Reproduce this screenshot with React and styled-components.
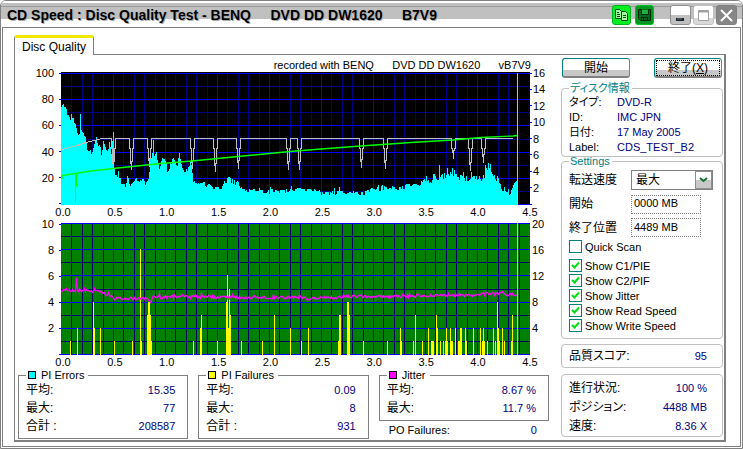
import React from "react";
import styled, { createGlobalStyle, css } from "styled-components";

const GlobalStyle = createGlobalStyle`
  *, *::before, *::after { box-sizing: border-box; }
  body {
    margin: 0;
    background: #fff;
    color: #000;
    font: 12px/14px "Liberation Sans", "Noto Sans CJK JP", sans-serif;
    font-feature-settings: "palt";
  }
  button, input, select { font: inherit; color: inherit; margin: 0; }
`;

/* ---------- window frame ---------- */

const Window = styled.div`
  display: flex;
  flex-direction: column;
  min-height: 100vh;
  border: 1px solid #808080;
  border-radius: 6px 6px 0 0;
  background: #fff;
`;

const TitleBar = styled.header`
  display: flex;
  align-items: center;
  gap: 3px;
  height: 26px;
  padding: 2px 5px 0 6px;
  border-radius: 5px 5px 0 0;
  background: linear-gradient(#fff 2px, #c0c0c0 2px 5px, #999 5px 6px, #c0c0c0 6px 18px, #fff 18px);
`;

const Title = styled.h1`
  flex: 1;
  margin: 0;
  font: bold 14px/16px "Liberation Sans", sans-serif;
  white-space: pre;
  text-shadow: 1px 1px 0 #aaa;
`;

const captionTones = {
  green: css`background: #00f020; border-color: #00b020;`,
  dark: css`background: #009820; border-color: #00c020;`,
  light: css`background: linear-gradient(#fff 9px, #c0c0c0 9px); border-color: #909090;`,
  pale: css`background: linear-gradient(#fff 12px, #d8d8d8 12px); border-color: #c0c0c0;`,
  gray: css`background: #868686; border-color: #808080;`,
};

const CaptionButton = styled.button`
  display: grid;
  place-items: center;
  width: ${(p) => (p.$small ? 19 : 21)}px;
  height: 20px;
  padding: 0;
  border: 1px solid;
  border-radius: 3px;
  ${(p) => captionTones[p.$tone]}
`;

const CaptionGroup = styled.div`
  display: flex;
  gap: ${(p) => p.$gap}px;
  margin-right: ${(p) => p.$end || 0}px;
`;

const Client = styled.main`
  flex: 1;
  display: flex;
  flex-direction: column;
  margin: 0 1px 1px;
  padding: 7px 14px 4px 11px;
  border: 1px solid #808080;
`;

const TabList = styled.div`
  display: flex;
`;

const Tab = styled.button`
  position: relative;
  z-index: 1;
  height: 20px;
  margin-bottom: -1px;
  padding: 0 7px;
  border: 1px solid #808080;
  border-top: 3px solid #f0e800;
  border-bottom: 0;
  border-radius: 3px 3px 0 0;
  background: #fff;
`;

const Panel = styled.section`
  flex: 1;
  display: flex;
  gap: 12px;
  padding: 3px 1px 0 3px;
  border: 1px solid #808080;
  border-right-width: 2px;
  border-bottom-width: 2px;
`;

const MainColumn = styled.div`
  flex: 1;
  min-width: 0;
`;

const SideColumn = styled.aside`
  flex: none;
  width: 162px;
`;

/* ---------- charts ---------- */

const Recorded = styled.p`
  margin: 0;
  padding-right: 18px;
  font-size: 11px;
  text-align: right;
  white-space: pre;
`;

const ChartGrid = styled.div`
  display: grid;
  grid-template-columns: 43px minmax(0, 1fr) 19px;
  margin-bottom: ${(p) => (p.$last ? 1 : 5)}px;
`;

const Plot = styled.svg`
  display: block;
  width: 100%;
  height: ${(p) => (p.$cap ? 133 : 132)}px;
  border-top: ${(p) => (p.$cap ? "1px solid #000" : "0")};
  background: ${(p) => p.$back};
`;

const Axis = styled.div`
  display: flex;
  flex-direction: column;
  justify-content: space-between;
  padding: 1px 0;
  font-size: 11px;
`;

const AxisTick = styled.span`
  display: flex;
  align-items: center;
  justify-content: flex-end;
  flex-direction: ${(p) => (p.$right ? "row-reverse" : "row")};
  gap: ${(p) => (p.$right ? 1 : 5)}px;
  height: 0;
  &::after {
    content: "";
    width: ${(p) => (p.$right && !p.$mark ? 1 : 2)}px;
    height: 1px;
    background: ${(p) => (p.$right && !p.$mark ? "transparent" : "#0000ff")};
  }
`;

const BottomAxis = styled.div`
  grid-column: 2;
  display: flex;
  justify-content: space-between;
  padding: 1px 0 0 2px;
  font-size: 11px;
  line-height: 12px;
`;

const BottomTick = styled.span`
  display: flex;
  justify-content: center;
  width: 0;
`;

const W = 469;
const H = 132;
const seeded = (n) => {
  const v = Math.sin(n * 127.1 + 11.7) * 43758.5453;
  return v - Math.floor(v);
};
const interpolate = (points, x) => {
  const i = points.findIndex((p) => p[0] >= x);
  if (i <= 0) return points[i === 0 ? 0 : points.length - 1][1];
  const [x0, y0] = points[i - 1];
  const [x1, y1] = points[i];
  return y0 + ((y1 - y0) * (x - x0)) / (x1 - x0);
};

const errorProfile = [
  [0, 97], [2, 101], [4, 95], [6, 90], [9, 82], [10, 88], [13, 80], [16, 73], [18, 70], [19, 90], [20, 75],
  [24, 65], [26, 53], [29, 52], [32, 57], [35, 66], [38, 57], [40, 52], [42, 61], [45, 53], [48, 60], [50, 50],
  [52, 73], [53, 35], [55, 30], [57, 31], [60, 22], [64, 20], [66, 27], [69, 21], [75, 26], [78, 21], [81, 26],
  [84, 20], [88, 28], [89, 42], [91, 50], [92, 63], [93, 48], [95, 50], [98, 38], [101, 47], [104, 41], [107, 34],
  [111, 46], [115, 37], [118, 48], [121, 36], [124, 30], [127, 40], [130, 40], [132, 24], [134, 20], [140, 24],
  [145, 20], [150, 18], [160, 16], [163, 25], [165, 21], [168, 27], [172, 23], [177, 21], [180, 16], [186, 14],
  [196, 13], [229, 14], [239, 15], [249, 15], [259, 12], [279, 13], [299, 11], [309, 14], [319, 15], [334, 17],
  [349, 19], [364, 22], [375, 25], [386, 30], [398, 28], [409, 26], [422, 26], [423, 26], [424, 43], [426, 36],
  [429, 38], [433, 30], [437, 22], [441, 16], [446, 12], [450, 13], [453, 20], [455, 23],
];
const errorSpikes = { 52: 73, 365: 29, 378: 40, 386: 37, 391: 37, 402: 33, 410: 33, 422: 30 };
const errorPath =
  `M0 ${H}` +
  Array.from({ length: 456 }, (_, x) => {
    const sample = x - (x % 2 && seeded(x) < 0.5 ? 1 : 0);
    const base = interpolate(errorProfile, x);
    const noise = (seeded(sample) - 0.5) * (base > 24 ? 7 : 5) + (seeded(sample + 900) > 0.88 ? 3 : 0);
    const h = Math.round(errorSpikes[x] || base + noise);
    return `V${H - h}H${x + 1}`;
  }).join("") +
  `V${H}Z`;

const dips = [
  [52, 97], [70, 97], [88, 94], [131, 96], [154, 99], [177, 96], [227, 97], [238, 97], [300, 95], [324, 96],
  [392, 86], [409, 98], [422, 90],
];
const speedLimit =
  "M1 76.5L8 74.5L16 72.5L25 69.5L33 67.5L41 65.5" +
  dips
    .map(([x, y]) => `H${x - 1.5}V75H${x - 0.5}V${y - 7}H${x + 0.5}V${y}V${y - 9}H${x + 1.5}V75H${x + 2.5}V65.5`)
    .join("") +
  "H452";

const readSpeed =
  "M1 106V102.5L30 98L52 95.5L100 90.5L131 88L177 83.5L229 78.5L260 76L300 73L350 69.5L392 67L420 64.5L452 63L456 62.5";

const failures = [
  [9, 1], [16, 2], [32, 4], [33, 2], [39, 2], [53, 1], [71, 1], [79, 8], [80, 1], [86, 3], [87, 4], [88, 4],
  [89, 3], [90, 1], [132, 1], [139, 2], [140, 3], [156, 1], [165, 4], [166, 6], [167, 2], [168, 5], [169, 3],
  [180, 1], [201, 1], [213, 3], [229, 2], [240, 1], [247, 2], [277, 1], [278, 3], [279, 3], [286, 4], [287, 4],
  [288, 3], [302, 1], [326, 1], [339, 2], [340, 1], [352, 1], [354, 3], [361, 1], [367, 2], [370, 1], [371, 1],
  [372, 1], [375, 3], [376, 2], [379, 1], [382, 1], [384, 1], [385, 2], [386, 1], [389, 2], [390, 1], [391, 1],
  [394, 2], [397, 1], [398, 1], [399, 2], [400, 2], [404, 2], [405, 1], [412, 2], [419, 2], [421, 1], [422, 2],
  [423, 1], [426, 1], [432, 2], [434, 1], [436, 4], [437, 2], [438, 1], [441, 2], [443, 1], [450, 1], [451, 3],
];
const failurePath = failures
  .map(([x, v]) => `M${x} ${H}V${Math.round(H - 1 - v * 13.1)}H${x + 1}V${H}Z`)
  .join("");

const jitterProfile = [
  [0, 68], [4, 66], [10, 67], [14, 67], [15, 55], [16, 67], [37, 68], [45, 71], [53, 75], [85, 75], [89, 78],
  [92, 72], [100, 74], [120, 73], [160, 74], [200, 74], [229, 74], [250, 75], [270, 74], [300, 73], [340, 73],
  [380, 72], [410, 72], [425, 70], [456, 71],
];
const jitterPath = Array.from({ length: 456 }, (_, x) => {
  const wave = (seeded(x + 300) - 0.5) * 3 + (seeded(x + 700) > 0.92 ? -2 : 0);
  return `${x ? "L" : "M"}${x + 0.5} ${Math.round(interpolate(jitterProfile, x) + wave) + 0.5}`;
}).join("");

function GridLines({ minor }) {
  const columns = Array.from({ length: 44 }, (_, i) => i + 1);
  const rows = Array.from({ length: 11 }, (_, i) => i);
  const x = (i) => Math.round(i * 10.4) + 0.5;
  const y = (i) => Math.round(i * 13.1) + 0.5;
  return (
    <g fill="none" shapeRendering="crispEdges">
      <path
        stroke={minor}
        d={
          columns.filter((i) => i % 5).map((i) => `M${x(i)} 0V${H}`).join("") +
          rows.filter((i) => i % 2).map((i) => `M0 ${y(i)}H${W}`).join("")
        }
      />
      <path
        stroke="#0000ff"
        d={
          columns.filter((i) => i % 5 === 0).map((i) => `M${x(i)} 0V${H}`).join("") +
          rows.filter((i) => i % 2 === 0).map((i) => `M0 ${y(i)}H${W}`).join("")
        }
      />
    </g>
  );
}

const positions = ["0.0", "0.5", "1.0", "1.5", "2.0", "2.5", "3.0", "3.5", "4.0", "4.5"];

function Chart({ label, left, right, marks, cap, back, minor, last, children }) {
  return (
    <ChartGrid $last={last}>
      <Axis>
        {left.map((t, i) => <AxisTick key={i}>{t}</AxisTick>)}
      </Axis>
      <Plot $cap={cap} $back={back} viewBox={`0 0 ${W} ${H}`} preserveAspectRatio="none" role="img" aria-label={label}>
        <GridLines minor={minor} />
        {children}
        <path d={`M456.5 0V${H}`} stroke="#c0c0c0" shapeRendering="crispEdges" />
      </Plot>
      <Axis>
        {right.map((t, i) => <AxisTick key={i} $right $mark={marks}>{t}</AxisTick>)}
      </Axis>
      <BottomAxis>
        {positions.map((t) => <BottomTick key={t}>{t}</BottomTick>)}
      </BottomAxis>
    </ChartGrid>
  );
}

/* ---------- statistics ---------- */

const StatsRow = styled.div`
  display: grid;
  grid-template-columns: repeat(3, minmax(0, 1fr));
  gap: 10px;
`;

const StatBox = styled.fieldset`
  min-width: 0;
  margin: 0;
  padding: 0 12px ${(p) => (p.$tight ? 3 : 2)}px 7px;
  border: 1px solid #808080;
`;

const StatLegend = styled.legend`
  display: flex;
  align-items: center;
  gap: 5px;
  height: 12px;
  padding: 0 4px 0 2px;
  font-size: 11px;
  line-height: 12px;
`;

const Swatch = styled.i`
  width: 8px;
  height: 8px;
  border: 1px solid #000;
  background: ${(p) => p.$color};
`;

const DataRow = styled.div`
  display: flex;
  align-items: center;
  justify-content: space-between;
  height: ${(p) => p.$height || 18}px;
  padding: ${(p) => (p.$loose ? "0 12px 0 10px" : "0")};
  font-size: ${(p) => (p.$loose ? 11 : 12)}px;
  white-space: nowrap;
`;

const Value = styled.output`
  color: #000080;
  font-size: 11px;
`;

function Stat({ title, color, rows, tight }) {
  return (
    <StatBox $tight={tight}>
      <StatLegend><Swatch $color={color} />{title}</StatLegend>
      {rows.map(([k, v]) => (
        <DataRow key={k}><span>{k}</span><Value>{v}</Value></DataRow>
      ))}
    </StatBox>
  );
}

/* ---------- side panel ---------- */

const ButtonRow = styled.div`
  display: flex;
  justify-content: space-between;
  padding: 0 1px;
  margin-bottom: 3px;
`;

const PushButton = styled.button`
  width: 68px;
  height: 20px;
  padding: 0;
  border: 1px solid #008080;
  border-right-color: #808080;
  border-bottom: 2px solid #808080;
  border-radius: 3px;
  background: linear-gradient(#fff 11px, #c8c8c8 11px);
  line-height: 16px;
  outline: ${(p) => (p.$focused ? "1px dotted #000" : "none")};
  outline-offset: -3px;
`;

const Group = styled.fieldset`
  min-width: 0;
  margin: 0 0 ${(p) => p.$after || 0}px;
  padding: ${(p) => p.$pad || "0 7px"};
  border: 1px solid #c0c0c0;
  border-radius: 4px;
`;

const GroupLegend = styled.legend`
  height: 14px;
  padding: 0 2px 0 1px;
  color: #008080;
  font-size: 11px;
`;

const InfoList = styled.dl`
  display: grid;
  grid-template-columns: 48px 1fr;
  margin: 0;
  font-size: 11px;
  line-height: 15px;
`;

const InfoTerm = styled.dt``;

const InfoValue = styled.dd`
  margin: 0;
  color: #000080;
  white-space: nowrap;
`;

const Field = styled.div`
  display: grid;
  grid-template-columns: 62px 1fr;
  align-items: center;
  height: ${(p) => (p.$tall ? 24 : 23)}px;
`;

const SelectWrap = styled.div`
  position: relative;
  width: 82px;
`;

const Select = styled.select`
  display: block;
  appearance: none;
  width: 100%;
  height: 20px;
  padding: 0 20px 0 4px;
  border: 1px solid #808080;
  border-radius: 0;
  background: #fff;
`;

const SelectArrow = styled.svg`
  position: absolute;
  top: 1px;
  right: 1px;
  width: 17px;
  height: 18px;
  border: 1px solid #909090;
  background: linear-gradient(#fff 8px, #c8c8c8 8px);
  pointer-events: none;
`;

const TextInput = styled.input`
  width: 70px;
  height: 19px;
  padding: 0 2px 2px;
  border: 1px dotted #808080;
  background: #fff;
  font-size: 11px;
`;

const CheckLabel = styled.label`
  display: flex;
  align-items: center;
  gap: 3px;
  height: 15px;
  margin-bottom: ${(p) => (p.$apart ? 4 : 0)}px;
  font-size: 11px;
`;

const CheckBox = styled.input`
  appearance: none;
  flex: none;
  width: 13px;
  height: 13px;
  border: 1px solid #008080;
  background: #fff;
  &:checked {
    background: no-repeat center / 9px 9px
      url("data:image/svg+xml,%3Csvg xmlns='http://www.w3.org/2000/svg' viewBox='0 0 9 9'%3E%3Cpath d='M1 4L3.500 6.500L8 1.500' fill='none' stroke='%2300e010' stroke-width='2'/%3E%3C/svg%3E");
  }
`;

const options = [
  ["Quick Scan", false],
  ["Show C1/PIE", true],
  ["Show C2/PIF", true],
  ["Show Jitter", true],
  ["Show Read Speed", true],
  ["Show Write Speed", true],
];

const discInfo = [
  ["タイプ:", "DVD-R"],
  ["ID:", "IMC JPN"],
  ["日付:", "17 May 2005"],
  ["Label:", "CDS_TEST_B2"],
];

export default function App() {
  return (
    <>
      <GlobalStyle />
      <Window>
        <TitleBar>
          <Title>{"CD Speed : Disc Quality Test - BENQ     DVD DD DW1620     B7V9"}</Title>
          <CaptionGroup $gap={4} $end={13}>
            <CaptionButton $small $tone="green" aria-label="Copy">
              <svg width="15" height="14" viewBox="0 0 15 14" fill="#a0ffa0" stroke="#004000">
                <path d="M1.500 1.500H5.500L7.500 3.500V10.500H1.500Z" />
                <path d="M7.500 3.500H11.500L13.500 5.500V12.500H7.500Z" />
                <path d="M3 4.500H5M3 6.500H6M3 8.500H6M9 7.500H12M9 9.500H12" />
              </svg>
            </CaptionButton>
            <CaptionButton $small $tone="dark" aria-label="Save">
              <svg width="15" height="14" viewBox="0 0 15 14" fill="none" stroke="#002800">
                <path d="M1.500 1.500H13.500V12.500H3.500L1.500 10.500Z" fill="#006818" />
                <path d="M4.500 1.500V6.500H11.500V1.500" fill="#20b040" />
                <path d="M4.500 12V9.500H10.500V12M6.500 10V12" />
              </svg>
            </CaptionButton>
          </CaptionGroup>
          <CaptionGroup $gap={2}>
            <CaptionButton $tone="light" aria-label="Minimize">
              <svg width="17" height="16" viewBox="0 0 17 16">
                <path d="M4 11H12V14H4Z" fill="#202020" />
                <path d="M5 12H10" stroke="#5080a0" />
              </svg>
            </CaptionButton>
            <CaptionButton $tone="pale" aria-label="Maximize">
              <svg width="17" height="16" viewBox="0 0 17 16" fill="#fff" stroke="#a0a0a0">
                <path d="M3.500 3.500H13.500V13.500H3.500Z" />
                <path d="M3 4.500H14" strokeWidth="2" />
              </svg>
            </CaptionButton>
            <CaptionButton $tone="gray" aria-label="Close">
              <svg width="17" height="16" viewBox="0 0 17 16" stroke="#fff" strokeWidth="2">
                <path d="M3 3L14 14M14 3L3 14" />
              </svg>
            </CaptionButton>
          </CaptionGroup>
        </TitleBar>

        <Client>
          <TabList role="tablist">
            <Tab role="tab" aria-selected="true">Disc Quality</Tab>
          </TabList>
          <Panel role="tabpanel">
            <MainColumn>
              <Recorded>{"recorded with BENQ      DVD DD DW1620      vB7V9"}</Recorded>
              <Chart
                label="PI Errors"
                cap
                marks
                back="#000"
                minor="#000080"
                left={["100", "80", "60", "40", "20", ""]}
                right={["16", "14", "12", "10", "8", "6", "4", "2", ""]}
              >
                <path d={errorPath} fill="#00ffff" shapeRendering="crispEdges" />
                <path d={speedLimit} fill="none" stroke="#c0c0c0" shapeRendering="crispEdges" />
                <path d={readSpeed} fill="none" stroke="#00ff00" strokeWidth="1.4" />
                <path d="M14.500 101V129M15.500 101V114" stroke="#00ff00" shapeRendering="crispEdges" />
              </Chart>
              <Chart
                label="PI Failures"
                last
                back="#008000"
                minor="#000060"
                left={["10", "8", "6", "4", "2", ""]}
                right={["20", "16", "12", "8", "4", ""]}
              >
                <path d={failurePath} fill="#ffff00" shapeRendering="crispEdges" />
                <path d={jitterPath} fill="none" stroke="#ff00ff" strokeWidth="1.3" />
              </Chart>
              <StatsRow>
                <Stat title="PI Errors" color="#00ffff" rows={[["平均:", "15.35"], ["最大:", "77"], ["合計 :", "208587"]]} />
                <Stat title="PI Failures" color="#ffff00" rows={[["平均:", "0.09"], ["最大:", "8"], ["合計 :", "931"]]} />
                <div>
                  <Stat tight title="Jitter" color="#ff00ff" rows={[["平均:", "8.67 %"], ["最大:", "11.7 %"]]} />
                  <DataRow $loose>
                    <span>PO Failures:</span><Value>0</Value>
                  </DataRow>
                </div>
              </StatsRow>
            </MainColumn>

            <SideColumn>
              <ButtonRow>
                <PushButton>開始</PushButton>
                <PushButton $focused>終了(<u>X</u>)</PushButton>
              </ButtonRow>

              <Group $after={-3} $pad="0 7px 1px">
                <GroupLegend>ディスク情報</GroupLegend>
                <InfoList>
                  {discInfo.map(([k, v]) => (
                    <React.Fragment key={k}>
                      <InfoTerm>{k}</InfoTerm>
                      <InfoValue>{v}</InfoValue>
                    </React.Fragment>
                  ))}
                </InfoList>
              </Group>

              <Group $after={5} $pad="0 7px 5px">
                <GroupLegend>Settings</GroupLegend>
                <Field $tall>
                  <label htmlFor="speed">転送速度</label>
                  <SelectWrap>
                    <Select id="speed" defaultValue="最大"><option>最大</option></Select>
                    <SelectArrow viewBox="0 0 15 16" aria-hidden="true">
                      <path d="M4 6L7.500 9L11 6" fill="none" stroke="#107030" strokeWidth="2" />
                    </SelectArrow>
                  </SelectWrap>
                </Field>
                <Field $tall>
                  <label htmlFor="start">開始</label>
                  <TextInput id="start" defaultValue="0000 MB" />
                </Field>
                <Field>
                  <label htmlFor="end">終了位置</label>
                  <TextInput id="end" defaultValue="4489 MB" />
                </Field>
                {options.map(([name, on], i) => (
                  <CheckLabel key={name} $apart={i === 0}>
                    <CheckBox type="checkbox" defaultChecked={on} />
                    {name}
                  </CheckLabel>
                ))}
              </Group>

              <Group $after={6} $pad="2px 15px 2px 7px">
                <DataRow><span>品質スコア:</span><Value>95</Value></DataRow>
              </Group>

              <Group $pad="3px 15px 1px 7px">
                <DataRow $height={19}><span>進行状況:</span><Value>100 %</Value></DataRow>
                <DataRow $height={19}><span>ポジション:</span><Value>4488 MB</Value></DataRow>
                <DataRow $height={19}><span>速度:</span><Value>8.36 X</Value></DataRow>
              </Group>
            </SideColumn>
          </Panel>
        </Client>
      </Window>
    </>
  );
}
